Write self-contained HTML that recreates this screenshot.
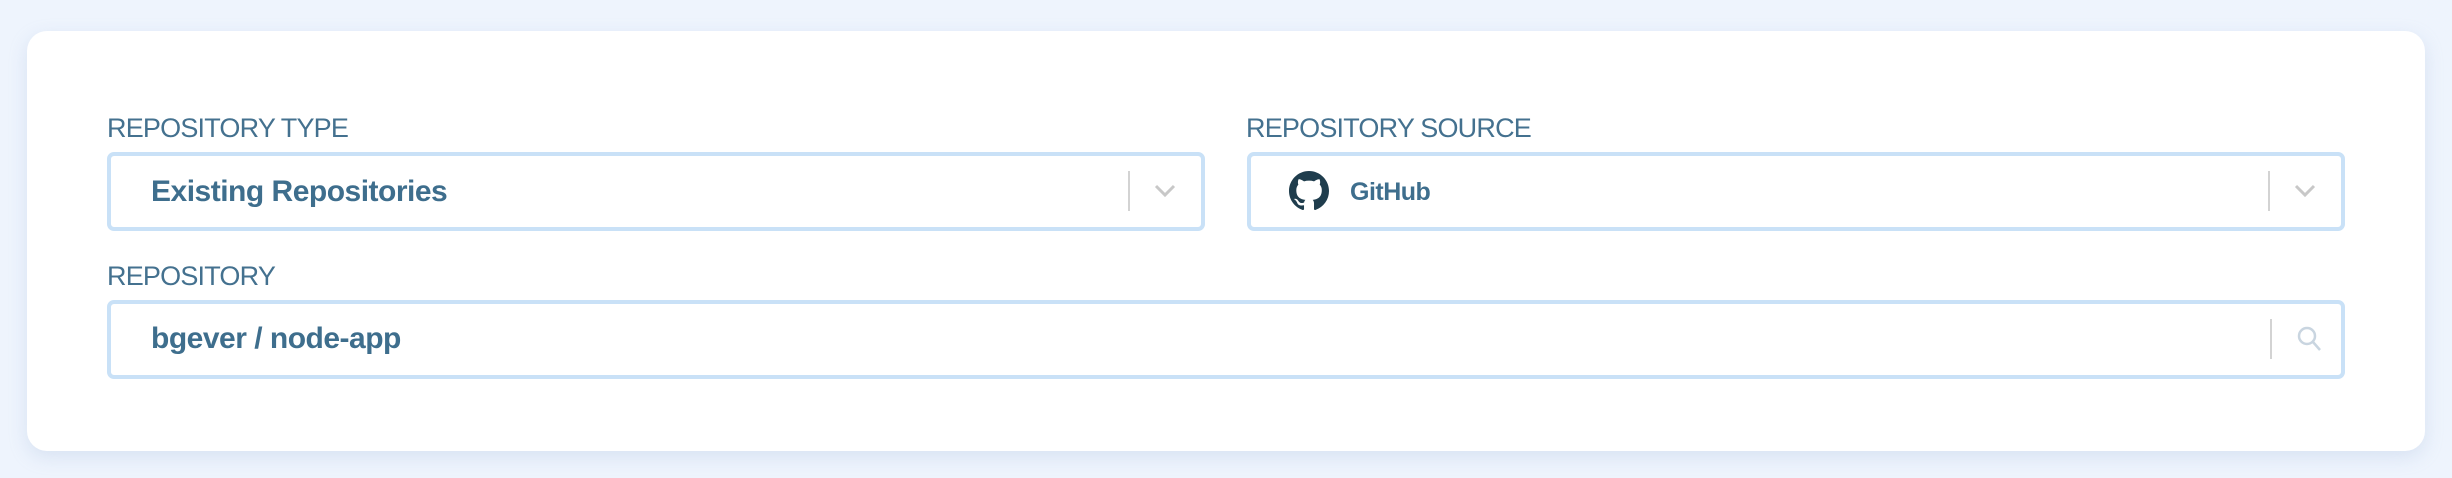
<!DOCTYPE html>
<html><head><style>
html,body{margin:0;padding:0;width:2452px;height:478px;background:#eef4fd;overflow:hidden;font-family:"Liberation Sans",sans-serif}
.card{position:absolute;left:27px;top:31px;width:2398px;height:420px;background:#fff;border-radius:20px;box-shadow:0 6px 18px rgba(150,175,210,.25)}
.lbl{position:absolute;font-size:27px;color:#44718f;letter-spacing:-0.8px;line-height:1}
.f{position:absolute;box-sizing:border-box;border:4px solid #c9e1f7;border-radius:7px;background:#fff}
.t{position:absolute;font-weight:bold;color:#3e6e8d;line-height:1;letter-spacing:-0.5px}
.div{position:absolute;width:2px;background:#d3d3d3}
</style></head><body>
<div class="card"></div>
<div class="lbl" style="left:107px;top:115px">REPOSITORY TYPE</div>
<div class="f" style="left:107px;top:152px;width:1098px;height:79px"></div>
<div class="t" style="left:151px;top:177px;font-size:30px">Existing Repositories</div>
<div class="div" style="left:1128px;top:171px;height:40px"></div>
<svg style="position:absolute;left:1154px;top:184px" width="22" height="14"><path d="M2 2 L11 11 L20 2" fill="none" stroke="#c8c8c8" stroke-width="3"/></svg>

<div class="lbl" style="left:1246px;top:115px">REPOSITORY SOURCE</div>
<div class="f" style="left:1247px;top:152px;width:1098px;height:79px"></div>
<svg style="position:absolute;left:1289px;top:171px" width="40" height="40" viewBox="0 0 16 16"><path fill="#1f3d4d" d="M8 0C3.58 0 0 3.58 0 8c0 3.54 2.29 6.53 5.47 7.59.4.07.55-.17.55-.38 0-.19-.01-.82-.01-1.49-2.01.37-2.53-.49-2.69-.94-.09-.23-.48-.94-.82-1.13-.28-.15-.68-.52-.01-.53.63-.01 1.08.58 1.23.82.72 1.21 1.87.87 2.33.66.07-.52.28-.87.51-1.07-1.78-.2-3.64-.89-3.64-3.95 0-.87.31-1.59.82-2.15-.08-.2-.36-1.02.08-2.12 0 0 .67-.21 2.2.82.64-.18 1.32-.27 2-.27.68 0 1.36.09 2 .27 1.53-1.04 2.2-.82 2.2-.82.44 1.1.16 1.92.08 2.12.51.56.82 1.27.82 2.15 0 3.07-1.87 3.75-3.65 3.95.29.25.54.73.54 1.48 0 1.07-.01 1.93-.01 2.2 0 .21.15.46.55.38A8.013 8.013 0 0016 8c0-4.42-3.58-8-8-8z"/></svg>
<div class="t" style="left:1350px;top:180px;font-size:25px">GitHub</div>
<div class="div" style="left:2268px;top:171px;height:40px"></div>
<svg style="position:absolute;left:2294px;top:184px" width="22" height="14"><path d="M2 2 L11 11 L20 2" fill="none" stroke="#c8c8c8" stroke-width="3"/></svg>

<div class="lbl" style="left:107px;top:263px">REPOSITORY</div>
<div class="f" style="left:107px;top:300px;width:2238px;height:79px"></div>
<div class="t" style="left:151px;top:324px;font-size:30px">bgever / node-app</div>
<div class="div" style="left:2270px;top:319px;height:40px"></div>
<svg style="position:absolute;left:2296px;top:325px" width="30" height="28"><circle cx="11" cy="11" r="8" fill="none" stroke="#c9d5e0" stroke-width="2.5"/><path d="M17 17 L24 25" stroke="#c9d5e0" stroke-width="2.5"/></svg>
</body></html>
